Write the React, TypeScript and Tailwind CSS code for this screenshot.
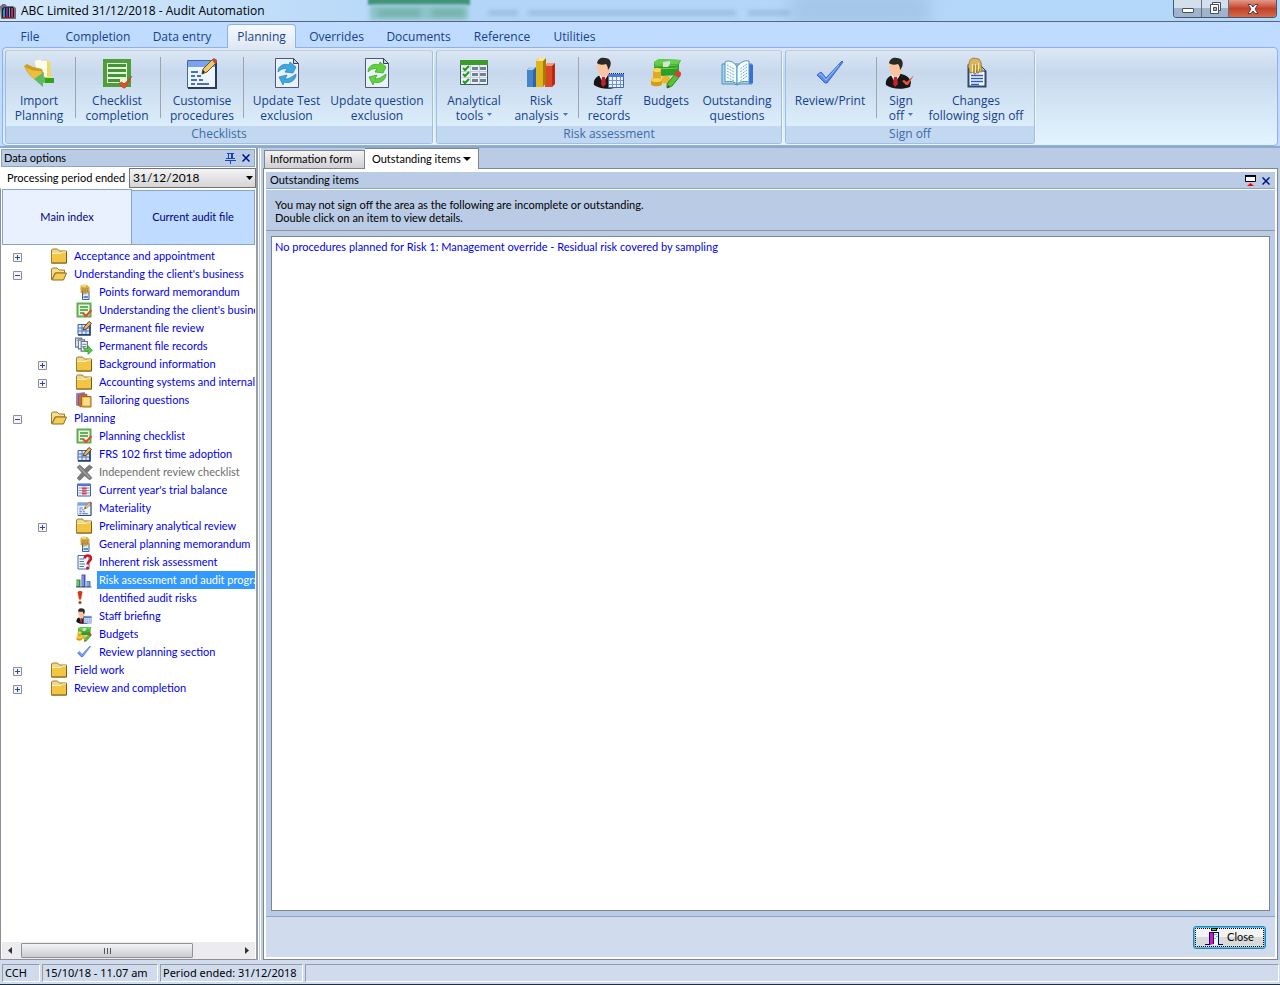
import { useState } from "react";
import type { ReactNode } from "react";

/* ---------- icons ---------- */

interface IconProps {
  size?: number;
}

interface SvgProps extends IconProps {
  children: ReactNode;
}

function Svg({ size = 32, children }: SvgProps) {
  return (
    <svg
      width={size}
      height={size}
      viewBox="0 0 32 32"
      fill="none"
      className="shrink-0"
      aria-hidden="true"
    >
      {children}
    </svg>
  );
}

function ImportIcon({ size }: IconProps) {
  return (
    <Svg size={size}>
      <path d="M11 4l4-2 3 1 8 1 1 16-12 1z" fill="#fdfdf0" stroke="#dcdcc0" />
      <path d="M24 4l3 1 1 15-4 1z" fill="#f3d95a" />
      <path d="M1 9l3-2 6 3 9 2 3 10-5 3C9 22 4 16 1 9z" fill="#cf9c1d" />
      <path d="M2 9c3 4 9 5 16 5l4 9-5 3C9 22 5 16 2 9z" fill="#e9bf3d" />
      <path d="M11 22l10-7-1 5 4 1v4l-4 1v4z" fill="#5fb862" />
      <path d="M22 21h9v5h-9z" fill="#2fa50f" />
    </Svg>
  );
}

function ChecklistIcon({ size }: IconProps) {
  return (
    <Svg size={size}>
      <path d="M2 2h28v28H2z" fill="#4f9e3b" />
      <path d="M6 6h20v20H6z" fill="#e4f3dc" />
      <path
        d="M7 8.500h18M7 13.500h18M7 18.500h18M7 23.500h12"
        stroke="#469435"
        strokeWidth="3"
      />
      <path d="M18 26l3-1 2 2 8-8-7 12h-2z" fill="#e64b2c" stroke="#b8351b" strokeWidth=".5" />
    </Svg>
  );
}

function CustomiseIcon({ size }: IconProps) {
  return (
    <Svg size={size}>
      <path d="M1.500 3.500h28v27h-28z" fill="#eff5ff" stroke="#47669f" />
      <path d="M2 4h27v6H2z" fill="#7ba2ec" />
      <path d="M30 4v27H2" stroke="#273a60" strokeWidth="2" />
      <path
        d="M5 15h7M5 19h4M11 19h4M5 23h6M13 23h4M5 27h4M11 27h12"
        stroke="#4a6fc2"
        strokeWidth="2"
      />
      <path d="M16 17l1-5L27 2l4 3-10 10z" fill="#f0c969" stroke="#6b5130" />
      <path d="M26 3l2-2 3 2v2l-2 2z" fill="#b84d42" />
      <path d="M16 17l1-4 2 2z" fill="#222" />
    </Svg>
  );
}

interface RefreshIconProps extends IconProps {
  light: string;
  dark: string;
}

function RefreshIcon({ size, light, dark }: RefreshIconProps) {
  return (
    <Svg size={size}>
      <path d="M4.500 1.500h18l5 5v24h-23z" fill="#eaf1fd" stroke="#4c597a" />
      <path d="M22.500 1.500v5h5z" fill="#c9d4e6" stroke="#34405c" />
      <path
        d="M7 15c0-7 7-9 11-7l1-3 6 5-3 6-8-1 2-3c-3-1-6 0-9 3z"
        fill={light}
        stroke={dark}
        strokeWidth=".7"
      />
      <path
        d="M25 17c0 7-7 10-12 8l-1 3-4-8 8-2-2 4c4 0 7-2 11-5z"
        fill={light}
        stroke={dark}
        strokeWidth=".7"
      />
    </Svg>
  );
}

function AnalyticalIcon({ size }: IconProps) {
  return (
    <Svg size={size}>
      <path d="M2.500 3.500h27v24h-27z" fill="#eef1f6" stroke="#3c5a66" />
      <path d="M2 3h28v5H2z" fill="#3b9c2b" />
      <path d="M12.500 8v19M21.500 8v19M3 14.500h26M3 20.500h26" stroke="#c4cddb" />
      <path
        d="M14 10h6v3h-6zM22 10h6v3h-6zM14 16h6v3h-6zM22 16h6v3h-6zM14 22h6v3h-6zM22 22h6v3h-6z"
        fill="#71809b"
      />
      <path
        d="M5 11l2 2 4-4M5 17l2 2 4-4M5 24l2 2 4-4"
        stroke="#1c9a1c"
        strokeWidth="2"
      />
    </Svg>
  );
}

function BarsIcon({ size }: IconProps) {
  return (
    <Svg size={size}>
      <path d="M2 13l3-3h6v20H2z" fill="#2c68a8" />
      <path d="M2 13h6v17H2z" fill="#4585c8" />
      <path d="M2 13l3-3h6l-3 3z" fill="#a8d0f2" />
      <path d="M20 9l3-3h7v21l-3 3h-7z" fill="#b32c12" />
      <path d="M20 9h7v21h-7z" fill="#dc4526" />
      <path d="M20 9l3-3h7l-3 3z" fill="#f79a80" />
      <path d="M11 4l3-3h7v25l-3 4h-7z" fill="#a57c08" />
      <path d="M11 4h7v26h-7z" fill="#dfb41c" />
      <path d="M11 4l3-3h7l-3 3z" fill="#fbe98a" />
    </Svg>
  );
}

function Person() {
  return (
    <>
      <path
        d="M1 28c-1-6 3-9 7-10l8-1c5 1 8 3 10 8l-1 5c-8 3-19 2-24-2z"
        fill="#161616"
      />
      <path d="M6 18l4 8 5-8z" fill="#f4f4f4" />
      <path d="M9 20h3l1 7-3 3-2-3z" fill="#c8202a" />
      <path d="M4 7c0-3 12-4 13 1 1 6-2 12-6 12S4 14 4 7z" fill="#f8c5a0" />
      <path
        d="M4 6c1-5 5-6 8-5 5 0 7 4 5 9l-2 3c0-3-1-5-2-6-3 1-7 1-9-1z"
        fill="#2b2828"
      />
    </>
  );
}

function StaffIcon({ size }: IconProps) {
  return (
    <Svg size={size}>
      <Person />
      <path d="M15.500 18.500h15v12h-15z" fill="#edf3ff" stroke="#3f66b4" />
      <path d="M15 17h16v3H15z" fill="#4c7ad6" />
      <path
        d="M19.500 20v10M23.500 20v10M27.500 20v10M16 23.500h14M16 27.500h14"
        stroke="#6f93df"
      />
      <path d="M16 16.500h15" stroke="#222" strokeDasharray="1 1" />
    </Svg>
  );
}

function SignIcon({ size }: IconProps) {
  return (
    <Svg size={size}>
      <Person />
      <path d="M17 24l2-1 3 2 7-7-6 10h-2z" fill="#f0542f" />
    </Svg>
  );
}

function BudgetIcon({ size }: IconProps) {
  return (
    <Svg size={size}>
      <path d="M4 5l5-3 22 1-2 4v11l-17 1-8-5z" fill="#2f9e25" />
      <path d="M4 5l5-3 22 1-3 4-23 1z" fill="#63cf4b" />
      <path d="M4 12l24-1M4 9l24-1" stroke="#6fd355" />
      <path d="M13 5l7-1v3l-2 3h-5z" fill="#d6e2d6" />
      <path d="M3 13c0-3 8-3 8 0v9H3z" fill="#e2a922" />
      <ellipse cx="7" cy="13" rx="4" ry="2" fill="#f9d75a" />
      <path d="M1 23c0-3 11-3 11 0v4c0 3-11 3-11 0z" fill="#d99b17" />
      <ellipse cx="6.500" cy="23" rx="5.500" ry="2" fill="#f8d24c" />
      <path d="M12 21c0-3 8-3 8 0v4c0 2-8 2-8 0z" fill="#e9b62c" />
      <path d="M17 27l9-11 4 3-8 10-5 2z" fill="#58c237" stroke="#2f8a1c" />
      <circle cx="28" cy="17" r="3" fill="#df3d32" />
      <path d="M17 31l1-3 2 2z" fill="#444" />
    </Svg>
  );
}

function BookIcon({ size }: IconProps) {
  return (
    <Svg size={size}>
      <path d="M1 7h30v20H19l-3 1-3-1H1z" fill="#a9d0ea" stroke="#4d92c2" />
      <path d="M28 7l4 1v18l-4 1z" fill="#3b72cf" />
      <path d="M4 5c3-2 9-1 12 5v17c-4-3-8-3-12-2z" fill="#f7fcff" stroke="#4a93c2" />
      <path d="M28 4c-4-1-9 1-12 6v17c4-3 8-3 12-2z" fill="#f7fcff" stroke="#4a93c2" />
      <path
        d="M6 8l7 4M6 11l7 4M6 14l7 4M6 17l7 4M6 20l7 4M26 7l-7 5M26 10l-7 5M26 13l-7 5M26 16l-7 5M26 19l-7 5"
        stroke="#6fa8d0"
        strokeDasharray="2 1"
      />
    </Svg>
  );
}

function TickIcon({ size }: IconProps) {
  return (
    <Svg size={size}>
      <path
        d="M3 18l4-3 5 6L28 4l1 1-16 21h-2z"
        fill="#5a8cf0"
        stroke="#3565c8"
        strokeLinejoin="round"
      />
      <path d="M5 18l2-1 5 6L25 8" stroke="#9cbcff" />
    </Svg>
  );
}

function HandNoteIcon({ size }: IconProps) {
  return (
    <Svg size={size}>
      <path d="M8.500 8.500h11l6 6v15h-17z" fill="#f7faff" stroke="#33466f" strokeWidth="2" />
      <path d="M20 8v6h6z" fill="#b7c6e2" stroke="#33466f" />
      <path
        d="M11 18.500h12M11 21.500h12M11 24.500h12M11 27.500h8"
        stroke="#2d5bbb"
        strokeWidth="1.500"
      />
      <path
        d="M10 3l3-2 6 1 2 3 1 10h-2l-1-3v4h-2l-1-3v4h-2l-1-3-1 2h-2l-1-5-1-1z"
        fill="#d8b65c"
        stroke="#85682a"
        strokeWidth=".7"
      />
      <path d="M12.500 7v8M15.500 7v9M18.500 6v8" stroke="#f7e7ae" />
      <path d="M14 8v8M17 8v8" stroke="#85682a" strokeWidth=".7" />
    </Svg>
  );
}

/* small icons, only used in the tree */

function SmallHandIcon() {
  return (
    <Svg size={16}>
      <path d="M13 14h13v17H13z" fill="#dfe9ff" stroke="#3f5f9f" strokeWidth="2" />
      <path d="M15 26h9" stroke="#3c6acb" strokeWidth="3" />
      <path d="M9 4l5-3 8 1 5 4v5H9z" fill="#dcae3e" />
      <path
        d="M11 9v9M15.500 9v12M20 9v11M25 9v10"
        stroke="#d3a236"
        strokeWidth="3.500"
      />
      <path d="M13.500 8v9M18 8v11M22.500 8v10" stroke="#7f5f1c" />
      <path d="M12 4h8" stroke="#f9e39a" strokeWidth="3" />
    </Svg>
  );
}

function FolderIcon() {
  return (
    <Svg size={16}>
      <path d="M1 4l2-2h10l4 4h14v24H1z" fill="#f3d687" stroke="#a17b25" strokeWidth="2" />
      <path d="M2 11h18l3-3h8v21H2z" fill="#f3c545" />
      <path d="M2 11h18l3-3h8" stroke="#fff2c2" strokeWidth="2" />
      <path d="M31 7v23H1" stroke="#7b5a17" strokeWidth="2" />
    </Svg>
  );
}

function OpenFolderIcon() {
  return (
    <Svg size={16}>
      <path d="M1 6l2-2h9l4 4h11v6H8L2 27H1z" fill="#f5dd98" stroke="#a17b25" strokeWidth="2" />
      <path d="M2 28l7-14h22l-6 14z" fill="#f6cd58" stroke="#8f6c20" strokeWidth="2" />
    </Svg>
  );
}

function SmallChecklistIcon() {
  return (
    <Svg size={16}>
      <path d="M3 3h26v26H3z" fill="#e8f6e1" stroke="#5fae4c" strokeWidth="4" />
      <path d="M8 10h16M8 16h16M8 22h8" stroke="#439433" strokeWidth="3" />
      <path d="M14 22l6 6 11-12" stroke="#df4a2a" strokeWidth="4" />
    </Svg>
  );
}

function GridPenIcon() {
  return (
    <Svg size={16}>
      <path d="M4 9h24v20H4z" fill="#dbe7ff" stroke="#3d5d9b" strokeWidth="2" />
      <path d="M12 9v20M20 9v20M4 16h24M4 22h24" stroke="#5378bd" strokeWidth="2" />
      <path d="M28 10v20H4" stroke="#243a66" strokeWidth="3" />
      <path d="M14 20l3-7L26 3l5 4-10 11z" fill="#e5b762" stroke="#594222" strokeWidth="2" />
    </Svg>
  );
}

function RecordsIcon() {
  return (
    <Svg size={18}>
      <path d="M1 2h11v16H1z" fill="#f3f6fb" stroke="#66738c" strokeWidth="2" />
      <path d="M6 5h11v16H6z" fill="#f3f6fb" stroke="#66738c" strokeWidth="2" />
      <path d="M11 8h11v17H11z" fill="#f3f6fb" stroke="#66738c" strokeWidth="2" />
      <path d="M13 13h7M13 17h7M3 6h7" stroke="#7f93b8" strokeWidth="2" />
      <path
        d="M14 17c4 4 6 3 9 3v-5l8 9-8 7v-5c-5 0-8-3-9-9z"
        fill="#5cc042"
        stroke="#2c8c22"
      />
    </Svg>
  );
}

function BooksIcon() {
  return (
    <Svg size={16}>
      <path d="M1 3l16-2v24L1 27z" fill="#8a84c2" stroke="#5d5894" />
      <path d="M5 6l17-2v23L9 30l-4-3z" fill="#cc644a" stroke="#8c3a24" />
      <path d="M11 9h19v21H13l-2-3z" fill="#f1c04d" stroke="#966b16" strokeWidth="2" />
      <path d="M15 12h12v14H15z" fill="#fbe094" />
    </Svg>
  );
}

function CrossIcon() {
  return (
    <Svg size={17}>
      <path
        d="M2 6l5-4 9 8 9-8 6 4-10 10 9 10-4 4-10-8-9 9-5-4 9-11z"
        fill="#7d7d7d"
        stroke="#555"
      />
      <path d="M6 6l20 20" stroke="#a9a9a9" strokeWidth="2" />
    </Svg>
  );
}

function BalanceIcon() {
  return (
    <Svg size={16}>
      <path d="M3 4h26v24H3z" fill="#f2f6ff" stroke="#3d62a8" strokeWidth="2" />
      <path d="M3 4h26v4H3z" fill="#4f79cc" />
      <path d="M12 9h9v18h-9z" fill="#f08a92" />
      <path d="M5 12h22M5 17h22M5 22h22" stroke="#8496bd" strokeWidth="2" />
      <path d="M12 13h9M12 18h9M12 23h9" stroke="#d9414e" strokeWidth="2" />
    </Svg>
  );
}

function QuestionDocIcon() {
  return (
    <Svg size={16}>
      <path d="M4 3h22v27H4z" fill="#f5f8ff" stroke="#50699d" strokeWidth="2" />
      <path d="M7 10h9M7 15h9M7 20h11M7 25h9" stroke="#4c75c4" strokeWidth="2" />
      <path d="M17 9c1-8 13-8 13 0 0 5-7 5-7 12" stroke="#cf1420" strokeWidth="5" />
      <circle cx="23" cy="28" r="3" fill="#cf1420" />
    </Svg>
  );
}

function SmallBarsIcon() {
  return (
    <Svg size={16}>
      <path d="M1 15h8v15H1z" fill="#2f9a2a" />
      <path d="M11 5h8v25h-8z" fill="#4a4fc0" />
      <path d="M21 18h8v12h-8z" fill="#4b83c9" />
      <path d="M3 17h2v11H3zM13 7h2v21h-2zM23 20h2v8h-2z" fill="#b6d0f2" />
      <path d="M0 30h31" stroke="#38507d" strokeWidth="2" />
    </Svg>
  );
}

function AlertIcon() {
  return (
    <Svg size={16}>
      <path d="M3 4c2-3 9-3 10 0l-3 15H6z" fill="#d8391c" />
      <circle cx="8" cy="25" r="3" fill="#c22f16" />
    </Svg>
  );
}

function DoorIcon() {
  return (
    <svg width="18" height="18" viewBox="0 0 18 18" aria-hidden="true">
      <path d="M6 0h6v3H6z" fill="#111" />
      <path d="M7 1h4v1H7z" fill="#3fe23f" />
      <path d="M4 4h10v12h4v1h-5V5H5v12H0v-1h4z" fill="#000080" />
      <path d="M5 5h3v11l-3 1z" fill="#d018c8" />
      <path d="M8 5h1v11H8z" fill="#3a0646" />
      <path d="M9 5h4v12H9z" fill="#eaffff" />
      <path d="M9 6h2v1H9zM11 8h2v1h-2zM9 10h2v1H9zM11 6h1v1h-1z" fill="#38d7e0" />
    </svg>
  );
}

function AppIcon() {
  return (
    <svg width="16" height="18" viewBox="0 0 16 18" aria-hidden="true">
      <path d="M0 4l2-1V2h3l2 2h6l3 2v11H1z" fill="#6d6f7c" />
      <path d="M2 7l2-2h9l1 2v9H2z" fill="#1c1c28" />
      <path d="M3 8l2-3v11H3z" fill="#2f98b4" />
      <path d="M6 6l2-1v11H6z" fill="#7a2a90" />
      <path d="M9 6l1-1v11H9z" fill="#3fc0c8" />
      <path d="M11 6h2v10h-2z" fill="#cc2266" />
      <path d="M2 15h12v1H2z" fill="#a3121e" />
    </svg>
  );
}

/* ---------- ribbon ---------- */

const menuTabs = [
  { label: "File", width: "w-[58px]" },
  { label: "Completion", width: "w-[78px]" },
  { label: "Data entry", width: "w-[90px]" },
  { label: "Planning", width: "w-[69px]" },
  { label: "Overrides", width: "w-[81px]" },
  { label: "Documents", width: "w-[83px]" },
  { label: "Reference", width: "w-[84px]" },
  { label: "Utilities", width: "w-[61px]" },
];

interface RibbonItem {
  lines: string[];
  icon: ReactNode;
  width: string;
  menu?: boolean;
  divider?: boolean;
}

interface RibbonGroupData {
  title: string;
  items: RibbonItem[];
}

const ribbonGroups: RibbonGroupData[] = [
  {
    title: "Checklists",
    items: [
      {
        lines: ["Import", "Planning"],
        icon: <ImportIcon />,
        width: "w-[69px] pr-[3px]",
        divider: true,
      },
      {
        lines: ["Checklist", "completion"],
        icon: <ChecklistIcon />,
        width: "w-[84px] pr-[2px]",
        divider: true,
      },
      {
        lines: ["Customise", "procedures"],
        icon: <CustomiseIcon />,
        width: "w-[82px]",
        divider: true,
      },
      {
        lines: ["Update Test", "exclusion"],
        icon: <RefreshIcon light="#3fa7e0" dark="#1f7fc0" />,
        width: "w-[85px]",
      },
      {
        lines: ["Update question", "exclusion"],
        icon: <RefreshIcon light="#5fd23c" dark="#37a223" />,
        width: "w-[103px] pr-[7px]",
      },
    ],
  },
  {
    title: "Risk assessment",
    items: [
      {
        lines: ["Analytical", "tools"],
        icon: <AnalyticalIcon />,
        width: "w-[74px]",
        menu: true,
      },
      {
        lines: ["Risk", "analysis"],
        icon: <BarsIcon />,
        width: "w-[67px] pr-[7px]",
        menu: true,
        divider: true,
      },
      { lines: ["Staff", "records"], icon: <StaffIcon />, width: "w-[60px]" },
      { lines: ["Budgets"], icon: <BudgetIcon />, width: "w-[54px]" },
      { lines: ["Outstanding", "questions"], icon: <BookIcon />, width: "w-[88px]" },
    ],
  },
  {
    title: "Sign off",
    items: [
      {
        lines: ["Review/Print"],
        icon: <TickIcon />,
        width: "w-[90px] pr-[2px]",
        divider: true,
      },
      { lines: ["Sign", "off"], icon: <SignIcon />, width: "w-[48px]", menu: true },
      {
        lines: ["Changes", "following sign off"],
        icon: <HandNoteIcon />,
        width: "w-[109px] pr-[7px]",
      },
    ],
  },
];

function MenuArrow() {
  return (
    <svg width="5" height="3" viewBox="0 0 5 3" className="mb-1 ml-1 inline" aria-hidden="true">
      <path d="M0 0h5L2.500 3z" fill="#4a78b8" />
    </svg>
  );
}

function RibbonGroup({ group }: { group: RibbonGroupData }) {
  return (
    <section className="flex flex-col rounded-[3px] border border-[#9fbfdf] border-t-[#c0cfe0] shadow-[1px_1px_0_#eef6fd]">
      <div className="flex grow">
        {group.items.map((item) => (
          <div key={item.lines.join(" ")} className="flex">
            <button
              className={`flex flex-col items-center pt-[6px] whitespace-nowrap hover:bg-white/30 ${item.width}`}
            >
              {item.icon}
              <span className="mt-1 text-center leading-[15px]">
                {item.lines[0]}
                <br />
                {item.lines[1]}
                {item.menu && <MenuArrow />}
              </span>
            </button>
            {item.divider && <div className="mt-[6px] h-[61px] w-px bg-[#a0a4ac]" />}
          </div>
        ))}
      </div>
      <h2 className="h-[17px] bg-[#c1d8f0] text-center leading-[16px] text-[#3e6aaa]">
        {group.title}
      </h2>
    </section>
  );
}

function TitleBar() {
  return (
    <header className="relative flex h-[22px] items-center overflow-hidden border-b border-[#566577] bg-linear-to-r from-[#d3e8fb] via-[#b3d6f8] via-35% to-[#b4d8fa]">
      <div className="absolute top-[-2px] left-[368px] h-[7px] w-[102px] bg-[#3f9277] blur-[1px]" />
      <div className="absolute top-[5px] left-[370px] h-[15px] w-[98px] bg-[#8cc3c8] blur-[2px]" />
      <div className="absolute top-[9px] left-[378px] h-[8px] w-[42px] bg-[#6aab9f] opacity-60 blur-[2px]" />
      <div className="absolute top-[9px] left-[432px] h-[8px] w-[32px] bg-[#6aab9f] opacity-60 blur-[2px]" />
      <div className="absolute top-[10px] left-[488px] h-[6px] w-[30px] bg-[#7f9cba] opacity-40 blur-[2px]" />
      <div className="absolute top-[10px] left-[528px] h-[6px] w-[208px] bg-[#7f9cba] opacity-40 blur-[2px]" />
      <div className="absolute top-[10px] left-[748px] h-[6px] w-[42px] bg-[#7f9cba] opacity-40 blur-[2px]" />
      <div className="absolute top-[-8px] left-[790px] h-[34px] w-[140px] bg-[#8fb0d0] opacity-40 blur-[8px]" />
      <AppIcon />
      <h1 className="relative ml-[5px] text-black">ABC Limited 31/12/2018 - Audit Automation</h1>
      <div className="relative mr-[3px] ml-auto flex h-[18px] self-start overflow-hidden rounded-b-[4px] border border-t-0 border-[#47566b]">
        <button
          aria-label="Minimise"
          className="flex w-[28px] items-center justify-center border-r border-[#5f6f86] bg-linear-to-b from-[#d3dfec] from-50% to-[#9fb3ca] to-50%"
        >
          <span className="mt-1 h-[5px] w-[12px] rounded-[1px] border border-[#46505f] bg-white" />
        </button>
        <button
          aria-label="Restore"
          className="flex w-[27px] items-center justify-center border-r border-[#5f6f86] bg-linear-to-b from-[#d3dfec] from-50% to-[#9fb3ca] to-50%"
        >
          <svg width="13" height="13" viewBox="0 0 13 13" aria-hidden="true">
            <path d="M3.500.5h8v8h-8z" fill="#fff" stroke="#46505f" />
            <path d="M1.500 2.500h8v9h-8z" fill="#fff" stroke="#46505f" />
            <path d="M4.500 5.500h3v3h-3z" fill="#a9bbd0" stroke="#46505f" />
          </svg>
        </button>
        <button
          aria-label="Close window"
          className="flex w-[47px] items-center justify-center bg-linear-to-b from-[#e29a88] via-[#c3402a] via-50% to-[#d4694a]"
        >
          <svg width="12" height="10" viewBox="0 0 12 10" aria-hidden="true">
            <path
              d="M1 .5h3l2 2.500L8 .5h3L8 5l3 4.500H8L6 7 4 9.500H1L4 5z"
              fill="#fff"
              stroke="#5a3b3b"
            />
          </svg>
        </button>
      </div>
    </header>
  );
}

function Ribbon() {
  const [activeTab, setActiveTab] = useState("Planning");

  return (
    <div className="bg-[#bfdbff] text-[#15428b]">
      <nav className="flex h-[25px] items-end pl-px">
        {menuTabs.map((tab) => (
          <button
            key={tab.label}
            onClick={() => setActiveTab(tab.label)}
            className={`relative top-px h-[24px] rounded-t-[4px] border border-b-0 text-center whitespace-nowrap ${tab.width} ${
              tab.label === activeTab
                ? "z-10 border-[#8db2e3] bg-linear-to-b from-[#f6faff] to-[#dfe8f3]"
                : "border-transparent"
            }`}
          >
            {tab.label}
          </button>
        ))}
      </nav>
      <div className="mx-[2px] flex h-[99px] gap-[3px] rounded-[4px] border border-[#8db2e3] bg-linear-to-b from-[#dee8f4] from-0% via-[#c7d8ed] via-25% to-[#e3f4ff] to-100% px-[2px] pt-[2px] pb-[1px]">
        {ribbonGroups.map((group) => (
          <RibbonGroup key={group.title} group={group} />
        ))}
      </div>
      <div className="h-[2px] bg-[#8ea9cf]" />
    </div>
  );
}

/* ---------- left panel ---------- */

interface TreeNode {
  label: string;
  level: 1 | 2;
  icon: ReactNode;
  toggle?: "+" | "-";
  disabled?: boolean;
}

const treeNodes: TreeNode[] = [
  { label: "Acceptance and appointment", level: 1, icon: <FolderIcon />, toggle: "+" },
  { label: "Understanding the client's business", level: 1, icon: <OpenFolderIcon />, toggle: "-" },
  { label: "Points forward memorandum", level: 2, icon: <SmallHandIcon /> },
  { label: "Understanding the client's business", level: 2, icon: <SmallChecklistIcon /> },
  { label: "Permanent file review", level: 2, icon: <GridPenIcon /> },
  { label: "Permanent file records", level: 2, icon: <RecordsIcon /> },
  { label: "Background information", level: 2, icon: <FolderIcon />, toggle: "+" },
  { label: "Accounting systems and internal", level: 2, icon: <FolderIcon />, toggle: "+" },
  { label: "Tailoring questions", level: 2, icon: <BooksIcon /> },
  { label: "Planning", level: 1, icon: <OpenFolderIcon />, toggle: "-" },
  { label: "Planning checklist", level: 2, icon: <SmallChecklistIcon /> },
  { label: "FRS 102 first time adoption", level: 2, icon: <GridPenIcon /> },
  { label: "Independent review checklist", level: 2, icon: <CrossIcon />, disabled: true },
  { label: "Current year's trial balance", level: 2, icon: <BalanceIcon /> },
  { label: "Materiality", level: 2, icon: <CustomiseIcon size={15} /> },
  { label: "Preliminary analytical review", level: 2, icon: <FolderIcon />, toggle: "+" },
  { label: "General planning memorandum", level: 2, icon: <SmallHandIcon /> },
  { label: "Inherent risk assessment", level: 2, icon: <QuestionDocIcon /> },
  { label: "Risk assessment and audit programme", level: 2, icon: <SmallBarsIcon /> },
  { label: "Identified audit risks", level: 2, icon: <AlertIcon /> },
  { label: "Staff briefing", level: 2, icon: <StaffIcon size={16} /> },
  { label: "Budgets", level: 2, icon: <BudgetIcon size={16} /> },
  { label: "Review planning section", level: 2, icon: <TickIcon size={16} /> },
  { label: "Field work", level: 1, icon: <FolderIcon />, toggle: "+" },
  { label: "Review and completion", level: 1, icon: <FolderIcon />, toggle: "+" },
];

function Toggle({ sign }: { sign?: "+" | "-" }) {
  if (!sign) return <span className="w-[9px] shrink-0" />;
  return (
    <button aria-label={sign === "+" ? "Expand" : "Collapse"} className="mt-[2px] shrink-0">
      <svg width="9" height="9" viewBox="0 0 9 9" aria-hidden="true">
        <path d="M.5.5h8v8h-8z" fill="#f4f4f4" stroke="#8f8f8f" />
        <path d={sign === "+" ? "M2 4.500h5M4.500 2v5" : "M2 4.500h5"} stroke="#2b4a9c" />
      </svg>
    </button>
  );
}

function DataTree() {
  const [selected, setSelected] = useState(18);

  return (
    <ul className="grow overflow-hidden pt-[2px]">
      {treeNodes.map((node, index) => (
        <li
          key={index}
          className={`flex h-[18px] items-center ${node.level === 1 ? "pl-[11px]" : "pl-[36px]"}`}
        >
          <Toggle sign={node.toggle} />
          <span className="ml-[29px] flex w-[16px] shrink-0 justify-center">{node.icon}</span>
          <button
            disabled={node.disabled}
            onClick={() => setSelected(index)}
            className={`ml-[5px] h-[18px] overflow-hidden pl-[2px] text-left whitespace-nowrap ${
              index === selected
                ? "bg-[#3399ff] text-white"
                : node.disabled
                  ? "text-[#6d6d6d]"
                  : "text-[#0000ee]"
            }`}
          >
            {node.label}
          </button>
        </li>
      ))}
    </ul>
  );
}

function PanelClose({ label }: { label: string }) {
  return (
    <button aria-label={label} className="p-[2px]">
      <svg width="8" height="8" viewBox="0 0 8 8" aria-hidden="true">
        <path d="M.5.5l7 7M7.500.5l-7 7" stroke="#00128a" strokeWidth="1.500" />
      </svg>
    </button>
  );
}

function Sidebar() {
  return (
    <aside className="flex w-[258px] shrink-0 flex-col border-r-2 border-[#9a9ca4] bg-white pt-px">
      <div className="mx-[1px] flex h-[18px] items-center border border-[#8da3c6] bg-[#b9cbe5] pr-[2px] pl-[2px]">
        <h2 className="grow">Data options</h2>
        <button aria-label="Pin panel" className="mr-[4px]">
          <svg width="11" height="11" viewBox="0 0 11 11" fill="none" aria-hidden="true">
            <path
              d="M2 .5h7M3.500 1v4M7.500 1v4M6.500 1v4M1 5.500h9M0 7.500h11M5.500 8v3"
              stroke="#1a44b0"
            />
          </svg>
        </button>
        <PanelClose label="Close data options" />
      </div>
      <div className="flex h-[21px] items-center pl-[7px]">
        <label htmlFor="period" className="w-[122px] shrink-0 pt-[2px] whitespace-nowrap">
          Processing period ended
        </label>
        <div className="relative grow">
          <select
            id="period"
            className="block h-[20px] w-full appearance-none border border-[#70747c] bg-linear-to-b from-[#f4f4f4] to-[#d5d5d5] pl-[3px] text-[12px] leading-[16px]"
          >
            <option>31/12/2018</option>
          </select>
          <svg
            width="7"
            height="4"
            viewBox="0 0 7 4"
            className="pointer-events-none absolute top-2 right-[3px]"
            aria-hidden="true"
          >
            <path d="M0 0h7L3.500 4z" fill="#000" />
          </svg>
        </div>
      </div>
      <div className="flex grow flex-col border border-r-0 border-[#8a8f99] border-t-transparent">
        <div className="mx-[1px] flex h-[56px] text-[#000080]">
          <button className="w-[130px] border border-[#8aa3c8] bg-[#e8f1fd]">Main index</button>
          <button className="mt-px grow border border-l-0 border-[#8aa3c8] bg-[#bfdbff]">
            Current audit file
          </button>
        </div>
        <div className="flex grow flex-col px-[1px]">
          <DataTree />
          <div className="flex h-[17px] items-center bg-[#ececee] px-[6px]">
            <svg width="4" height="7" viewBox="0 0 4 7" aria-hidden="true">
              <path d="M4 0v7L0 3.500z" fill="#333" />
            </svg>
            <div className="mx-[9px] flex h-[15px] w-[172px] items-center justify-center gap-[2px] rounded-[1px] border border-[#8f9296] bg-linear-to-b from-[#f4f4f5] via-[#dfe0e3] to-[#cbccd2]">
              <span className="h-[6px] w-px bg-[#555]" />
              <span className="h-[6px] w-px bg-[#555]" />
              <span className="h-[6px] w-px bg-[#555]" />
            </div>
            <svg width="4" height="7" viewBox="0 0 4 7" className="ml-auto" aria-hidden="true">
              <path d="M0 0v7l4-3.500z" fill="#333" />
            </svg>
          </div>
        </div>
      </div>
    </aside>
  );
}

/* ---------- right panel ---------- */

function OutstandingItems() {
  return (
    <main className="flex grow flex-col">
      <div className="flex h-[20px] items-end bg-[#b9cbe5] pl-px">
        <button className="h-[18px] w-[101px] border border-b-0 border-[#80848c] bg-linear-to-b from-[#f4f4f4] to-[#d0d0d4] pl-[5px] text-left">
          Information form
        </button>
        <button className="relative top-px flex h-[21px] w-[114px] items-center justify-between border border-b-0 border-l-0 border-[#80848c] bg-white pr-[7px] pl-[7px]">
          Outstanding items
          <svg width="8" height="4" viewBox="0 0 8 4" aria-hidden="true">
            <path d="M0 0h8L4 4z" fill="#000" />
          </svg>
        </button>
      </div>
      <div className="mr-[2px] flex grow flex-col border border-[#80848c] bg-white px-[2px] pt-[3px] pb-[2px]">
        <div className="flex h-[17px] items-center border-b border-[#8aa3c8] bg-[#b9cbe5] pt-px pr-[3px] pl-[4px]">
          <h2 className="grow">Outstanding items</h2>
          <button aria-label="Dock window" className="mr-[4px]">
            <svg width="11" height="11" viewBox="0 0 11 11" aria-hidden="true">
              <path d="M.5.5h10v6H.5z" fill="#fff" stroke="#000" />
              <path d="M0 0h11v2H0z" fill="#000" />
              <path d="M2 1h5v1H2z" fill="#0000a0" />
              <path d="M5.500 8L9 11H2z" fill="#f00" />
            </svg>
          </button>
          <PanelClose label="Close outstanding items" />
        </div>
        <div className="mt-px border-b border-[#94989f] bg-[#b9cbe5] px-[9px] pt-[8px] pb-[6px] leading-[13px]">
          <p>You may not sign off the area as the following are incomplete or outstanding.</p>
          <p>Double click on an item to view details.</p>
        </div>
        <div className="flex grow flex-col border-b border-[#8aa3c8] bg-[#b9cbe5] px-[5px] py-[5px]">
          <ul className="grow border border-[#80848c] bg-white px-[3px] pt-[2px] text-[#0000ee]">
            <li>
              No procedures planned for Risk 1: Management override - Residual risk covered by
              sampling
            </li>
          </ul>
        </div>
        <div className="flex h-[40px] items-center justify-end bg-[#d0dcee] px-[9px]">
          <button className="flex h-[23px] w-[73px] items-center justify-center gap-1 rounded-[3px] border border-[#2f7fae] bg-linear-to-b from-[#f3f3f3] from-50% to-[#dadada] to-50% outline-1 -outline-offset-3 outline-dotted outline-black ring-1 ring-[#45c6ef] ring-inset">
            <DoorIcon />
            Close
          </button>
        </div>
      </div>
    </main>
  );
}

function StatusBar() {
  const cell =
    "h-[18px] border border-t-[#9a9ca4] border-r-white border-b-white border-l-[#9a9ca4] pl-[2px] leading-[16px] whitespace-nowrap";
  return (
    <footer className="flex h-[25px] gap-[2px] border-b border-[#1c3046] bg-[#d0dcee] pt-[4px] pr-px pl-[2px] font-['Noto_Sans',sans-serif] text-[11px]">
      <span className={`w-[38px] ${cell}`}>CCH</span>
      <span className={`w-[116px] ${cell}`}>15/10/18 - 11.07 am</span>
      <span className={`w-[143px] ${cell}`}>Period ended: 31/12/2018</span>
      <span className={`grow ${cell}`} />
    </footer>
  );
}

export default function App() {
  return (
    <div className="flex min-h-screen flex-col bg-[#b9cbe5] font-['Lato','Liberation_Sans',sans-serif] text-[11px] text-black">
      <div className="font-['Open_Sans','Noto_Sans',sans-serif] text-[12px]">
        <TitleBar />
        <Ribbon />
      </div>
      <div className="flex grow">
        <Sidebar />
        <div className="mr-[2px] w-[3px] shrink-0 border-x border-white bg-[#b9cbe5]" />
        <OutstandingItems />
      </div>
      <StatusBar />
    </div>
  );
}
